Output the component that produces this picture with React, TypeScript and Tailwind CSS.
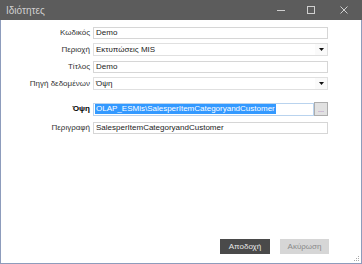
import React from "react";

const font = { fontFamily: '"Liberation Sans", Arial, sans-serif' };

function Label({ children, bold }: { children: React.ReactNode; bold?: boolean }) {
  return (
    <div className={`w-[92px] shrink-0 pr-[3px] text-right text-[8px] leading-none text-[#333] ${bold ? "font-bold text-black" : ""}`}>
      {children}
    </div>
  );
}

function TextBox({ value }: { value: string }) {
  return (
    <div className="flex h-[12px] w-[235px] items-center border border-[#d6d6d6] bg-white pl-[2px] text-[8px] leading-none text-[#222]">
      {value}
    </div>
  );
}

function Select({ value }: { value: string }) {
  return (
    <div className="flex h-[13px] w-[235px] items-center border border-[#e0e0e0] bg-white text-[8px] leading-none text-[#222]">
      <span className="flex-1 pl-[2px]">{value}</span>
      <div className="flex h-full w-[12px] items-center justify-center bg-[#fafafa]">
        <svg width="5" height="3" viewBox="0 0 5 3">
          <path d="M0 0h5L2.5 3z" fill="#111" />
        </svg>
      </div>
    </div>
  );
}

export default function App() {
  return (
    <div className="flex h-[264px] w-[362px] flex-col bg-white" style={font}>
      <div className="flex h-[20px] items-center bg-[#5c5c5c] pl-[6px]">
        <span className="flex-1 text-[10px] text-[#d0d0d0]">Ιδιότητες</span>
        <div className="flex h-full items-center">
          <div className="flex w-[30px] justify-center">
            <div className="h-px w-[8px] bg-[#cfcfcf]" />
          </div>
          <div className="flex w-[30px] justify-center">
            <div className="h-[8px] w-[8px] border border-[#cfcfcf]" />
          </div>
          <div className="flex w-[36px] justify-center">
            <svg width="8" height="8" viewBox="0 0 8 8">
              <path d="M0.5 0.5L7.5 7.5M7.5 0.5L0.5 7.5" stroke="#cfcfcf" strokeWidth="1" />
            </svg>
          </div>
        </div>
      </div>
      <div className="relative flex flex-1 flex-col border-x border-b border-[#8d9cbc]">
        <div className="mt-[7px] flex items-center">
          <Label>Κωδικός</Label>
          <TextBox value="Demo" />
        </div>
        <div className="mt-[4px] flex items-center">
          <Label>Περιοχή</Label>
          <Select value="Εκτυπώσεις MIS" />
        </div>
        <div className="mt-[5px] flex items-center">
          <Label>Τίτλος</Label>
          <TextBox value="Demo" />
        </div>
        <div className="mt-[4px] flex items-center">
          <Label>Πηγή δεδομένων</Label>
          <Select value="Όψη" />
        </div>
        <div className="mt-[12px] flex items-center">
          <Label bold>Όψη</Label>
          <div className="flex h-[14px] w-[235px] items-center">
            <div className="flex h-[13px] flex-1 items-center border border-[#b9d3ee] bg-white pl-[1px]">
              <span className="bg-[#3399ff] px-[1px] text-[8px] leading-[10px] text-white">
                OLAP_ESMis\SalesperItemCategoryandCustomer
              </span>
            </div>
            <div className="flex h-full w-[14px] items-center justify-center border border-[#adadad] bg-[#e1e1e1] text-[7px] leading-none text-[#9b59b6]">
              ...
            </div>
          </div>
        </div>
        <div className="mt-[6px] flex items-center">
          <Label>Περιγραφή</Label>
          <TextBox value="SalesperItemCategoryandCustomer" />
        </div>
        <div className="mt-auto mb-[9px] flex justify-end gap-[10px] pr-[32px]">
          <div className="flex h-[15px] w-[50px] items-center justify-center bg-[#4a4a4a] text-[8px] text-[#e8e8e8]">
            Αποδοχή
          </div>
          <div className="flex h-[15px] w-[49px] items-center justify-center bg-[#d6d6d6] text-[8px] text-[#8a8a8a]">
            Ακύρωση
          </div>
        </div>
        <svg className="absolute bottom-[1px] right-[1px]" width="6" height="6" viewBox="0 0 6 6">
          <rect x="4" y="0" width="1" height="1" fill="#aaa" />
          <rect x="2" y="2" width="1" height="1" fill="#aaa" />
          <rect x="4" y="2" width="1" height="1" fill="#aaa" />
          <rect x="0" y="4" width="1" height="1" fill="#aaa" />
          <rect x="2" y="4" width="1" height="1" fill="#aaa" />
          <rect x="4" y="4" width="1" height="1" fill="#aaa" />
        </svg>
      </div>
    </div>
  );
}
